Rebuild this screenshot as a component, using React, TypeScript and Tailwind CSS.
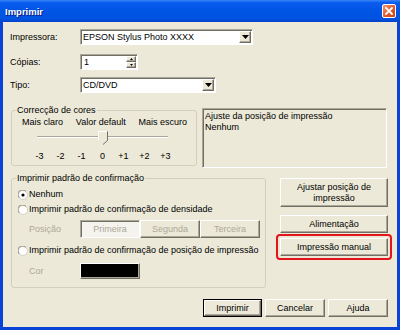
import React from "react";

const raised =
  "border border-t-white border-l-white border-b-[#716F64] border-r-[#716F64] shadow-[inset_-1px_-1px_0_#ACA899]";
const sunken =
  "border border-t-[#ACA899] border-l-[#ACA899] border-b-white border-r-white shadow-[inset_1px_1px_0_#716F64]";

function DownArrow() {
  return (
    <svg width="7" height="4" viewBox="0 0 7 4">
      <path d="M0 0h7L3.5 4z" fill="#000" />
    </svg>
  );
}

function Combo({ value, className }: { value: string; className: string }) {
  return (
    <div className={`flex h-[16px] bg-white ${sunken} ${className}`}>
      <span className="flex-1 pl-[2px] leading-[14px] truncate">{value}</span>
      <span className={`m-[1px] flex w-[12px] items-center justify-center bg-[#ECE9D8] ${raised}`}>
        <DownArrow />
      </span>
    </div>
  );
}

function Spinner() {
  return (
    <div className={`flex h-[16px] w-[58px] bg-white ${sunken}`}>
      <span className="flex-1 pl-[3px] leading-[14px]">1</span>
      <span className="m-[1px] flex w-[10px] flex-col">
        <span className={`flex flex-1 items-center justify-center bg-[#ECE9D8] ${raised}`}>
          <svg width="3" height="2" viewBox="0 0 3 2">
            <path d="M0 2h3L1.5 0z" fill="#000" />
          </svg>
        </span>
        <span className={`flex flex-1 items-center justify-center bg-[#ECE9D8] ${raised}`}>
          <svg width="3" height="2" viewBox="0 0 3 2">
            <path d="M0 0h3L1.5 2z" fill="#000" />
          </svg>
        </span>
      </span>
    </div>
  );
}

function Radio({ checked }: { checked?: boolean }) {
  return (
    <svg width="10" height="10" viewBox="0 0 10 10" className="shrink-0">
      <circle cx="5" cy="5" r="4.5" fill="#fff" stroke="#D4D0C8" />
      <path d="M1.2 7.8A4.3 4.3 0 0 1 7.8 1.2" fill="none" stroke="#808080" />
      {checked && <circle cx="5" cy="5" r="1.6" fill="#000" />}
    </svg>
  );
}

function Button({ children, className = "" }: { children: React.ReactNode; className?: string }) {
  return (
    <div className={`flex items-center justify-center bg-[#ECE9D8] text-center ${raised} ${className}`}>
      {children}
    </div>
  );
}

export default function App() {
  const ticks = ["-3", "-2", "-1", "0", "+1", "+2", "+3"];

  return (
    <div className="flex h-[330px] w-[400px] flex-col bg-[#0842D9] font-['Liberation_Sans',Arial,sans-serif] text-[9px] leading-[11px] text-black">
      {/* Title bar */}
      <div className="flex h-[22px] shrink-0 items-center justify-between bg-[linear-gradient(180deg,#3A86F8_0%,#0A5CEE_12%,#0055E5_50%,#0052DF_85%,#0043C9_100%)] pl-[5px] pr-[4px]">
        <span className="text-[9.5px] font-bold text-white [text-shadow:1px_1px_0_#0A1883]">Imprimir</span>
        <div className="flex h-[14px] w-[14px] items-center justify-center rounded-[2px] border border-white bg-[linear-gradient(135deg,#F09A74_0%,#E0592B_55%,#C7421A_100%)]">
          <svg width="8" height="8" viewBox="0 0 8 8">
            <path d="M1 1l6 6M7 1L1 7" stroke="#fff" strokeWidth="1.8" strokeLinecap="square" />
          </svg>
        </div>
      </div>

      {/* Body */}
      <div className="mx-[3px] mb-[3px] flex-1 bg-[#ECE9D8] pl-[7px] pr-[9px] pt-[7px]">
        <div className="flex h-[16px] items-center">
          <span className="w-[70px]">Impressora:</span>
          <Combo value="EPSON Stylus Photo XXXX" className="w-[173px]" />
        </div>
        <div className="mt-[9px] flex h-[16px] items-center">
          <span className="w-[70px]">Cópias:</span>
          <Spinner />
        </div>
        <div className="mt-[7px] flex h-[16px] items-center">
          <span className="w-[70px]">Tipo:</span>
          <Combo value="CD/DVD" className="w-[136px]" />
        </div>

        {/* Color correction + info */}
        <div className="mt-[11px] flex items-start">
          <fieldset className="ml-[1px] w-[186px] rounded-[3px] border border-[#D0D0BF] pb-[3px]">
            <legend className="ml-[4px] px-[1px] leading-[13px]">Correcção de cores</legend>
            <div className="flex justify-between pl-[10px] pr-[9px]">
              <span>Mais claro</span>
              <span>Valor default</span>
              <span>Mais escuro</span>
            </div>
            <div className="relative ml-[25px] flex h-[18px] w-[131px] items-center">
              <div className="h-[2px] w-full border-t border-t-[#ACA899] border-b border-b-white" />
              <svg width="10" height="14" viewBox="0 0 10 14" className="absolute left-[61px] top-[3px]">
                <path d="M0.5 0.5H9.5V9.5L5 13.5L0.5 9.5Z" fill="#ECE9D8" />
                <path d="M0.5 9.5V0.5H9" fill="none" stroke="#fff" />
                <path d="M9.5 0.5V9.5L5 13.5" fill="none" stroke="#716F64" />
              </svg>
            </div>
            <div className="ml-[17px] mt-[5px] grid grid-cols-[repeat(7,21px)] text-center">
              {ticks.map((t) => (
                <span key={t}>{t}</span>
              ))}
            </div>
          </fieldset>

          <div className={`ml-[5px] mt-[4px] h-[60px] w-[185px] pl-[2px] pt-[2px] ${sunken}`}>
            <div>Ajuste da posição de impressão</div>
            <div>Nenhum</div>
          </div>
        </div>

        {/* Confirmation pattern + side buttons */}
        <div className="mt-[4px] flex items-start">
          <fieldset className="ml-[1px] w-[255px] rounded-[3px] border border-[#D0D0BF] pb-[8px]">
            <legend className="ml-[4px] px-[1px] leading-[13px]">Imprimir padrão de confirmação</legend>
            <div className="ml-[6px] mt-[3px] flex h-[13px] items-center gap-[1px]">
              <Radio checked />
              <span>Nenhum</span>
            </div>
            <div className="ml-[6px] mt-[2px] flex h-[13px] items-center gap-[1px]">
              <Radio />
              <span>Imprimir padrão de confirmação de densidade</span>
            </div>
            <div className="ml-[17px] mt-[4px] flex h-[18px] items-center">
              <span className="w-[51px] text-[#ACA899]">Posição</span>
              <div className={`flex h-full w-[60px] items-center justify-center bg-[#F4F3EE] text-[#ACA899] ${sunken}`}>
                Primeira
              </div>
              <Button className="h-full w-[60px] text-[#ACA899]">Segunda</Button>
              <Button className="h-full w-[60px] text-[#ACA899]">Terceira</Button>
            </div>
            <div className="ml-[6px] mt-[6px] flex h-[13px] items-center gap-[1px]">
              <Radio />
              <span>Imprimir padrão de confirmação de posição de impressão</span>
            </div>
            <div className="ml-[17px] mt-[6px] flex h-[16px] items-center">
              <span className="w-[51px] text-[#ACA899]">Cor</span>
              <div className={`h-full w-[60px] bg-black ${raised}`} />
            </div>
          </fieldset>

          <div className="ml-[14px] flex w-[108px] flex-col pt-[6px]">
            <Button className="h-[29px]">
              Ajustar posição de
              <br />
              impressão
            </Button>
            <Button className="mt-[8px] h-[18px]">Alimentação</Button>
            <div className="-mx-[4px] mt-[1px] rounded-[4px] border-2 border-[#E3141B] p-[2px]">
              <Button className="h-[18px]">Impressão manual</Button>
            </div>
          </div>
        </div>

        {/* Dialog buttons */}
        <div className="mt-[11px] flex justify-end gap-[3px]">
          <div className="border border-black">
            <Button className="h-[16px] w-[57px]">Imprimir</Button>
          </div>
          <Button className="h-[18px] w-[60px]">Cancelar</Button>
          <Button className="h-[18px] w-[60px]">Ajuda</Button>
        </div>
      </div>
    </div>
  );
}
